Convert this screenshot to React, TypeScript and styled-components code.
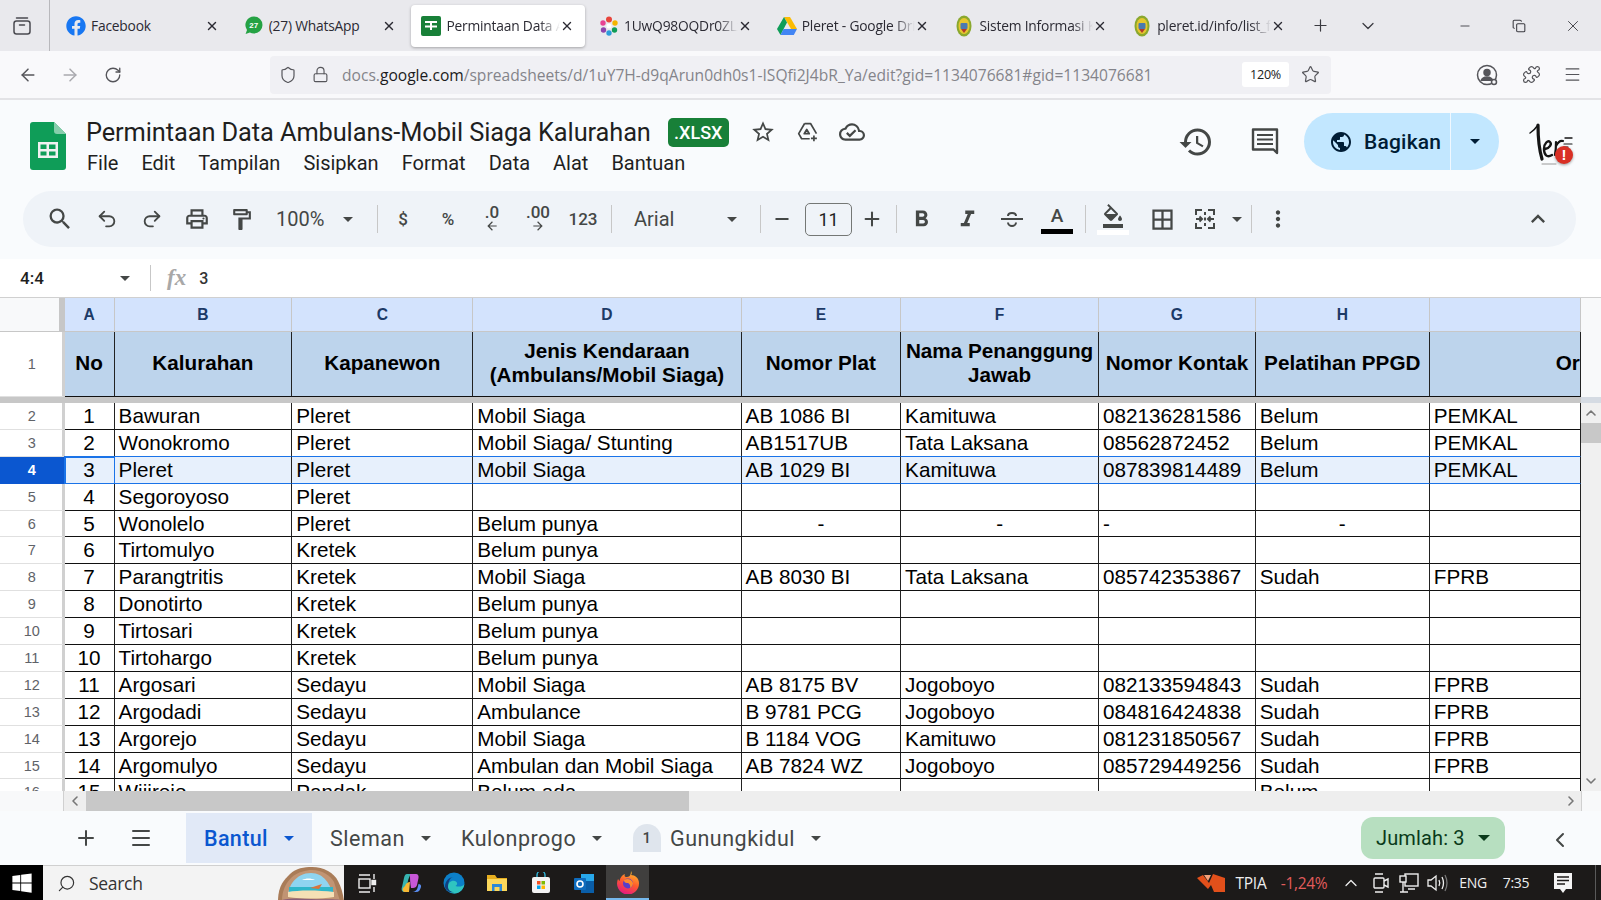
import styled, { createGlobalStyle } from 'styled-components'
import type { ReactNode } from 'react'
import {
  ArrowLeft, ArrowRight, ChevronDown, ChevronLeft, ChevronRight, ChevronUp, Copy, Lock, Menu, Minus, Plus, Puzzle, Redo2, RotateCw, Search, Shield, Star, Undo2, X,
} from 'lucide-react'
import {
  MdArrowBack, MdArrowForward, MdBorderAll, MdExpandLess, MdFormatBold, MdFormatColorFill, MdFormatItalic, MdHistory, MdMoreVert,
  MdOutlineCloudDone, MdOutlineFormatPaint, MdOutlinePrint, MdOutlineStarBorder, MdPublic, MdSearch,
} from 'react-icons/md'
import { FaFacebook, FaWindows } from 'react-icons/fa'

const GlobalStyle = createGlobalStyle`
  html, body {
    margin: 0;
    padding: 0;
    height: 100%;
    overflow: hidden;
    background: #fff;
    font-family: "Liberation Sans", Arial, sans-serif;
  }
  * { box-sizing: border-box; }
`

const Page = styled.div`
  width: 1601px;
  height: 900px;
  display: flex;
  flex-direction: column;
  overflow: hidden;
`

/* browser chrome */
const TabStrip = styled.div`
  height: 51px;
  flex: none;
  display: flex;
  align-items: center;
  background: #e9e9ed;
  color: #15141a;
`
const TabViewSlot = styled.div`
  width: 50px;
  height: 51px;
  flex: none;
  display: flex;
  align-items: center;
  justify-content: center;
  padding-right: 5px;
  border-right: 1px solid #b8b8bc;
  margin-right: 6px;
`
const TabRow = styled.div`
  display: flex;
  gap: 4.2px;
  margin-right: 2.5px;
`
const Tab = styled.div<{ $active?: boolean }>`
  width: 173.5px;
  height: 42px;
  display: flex;
  align-items: center;
  padding: 0 11px 0 10px;
  border-radius: 4px;
  background: ${p => (p.$active ? '#fff' : 'transparent')};
  box-shadow: ${p => (p.$active ? '0 1px 3px rgba(0,0,0,.3)' : 'none')};
`
const TabIcon = styled.div`
  width: 20px;
  height: 20px;
  flex: none;
  display: flex;
  align-items: center;
  justify-content: center;
  margin-right: 5px;
  position: relative;
`
const TabTitle = styled.span<{ $fade?: boolean }>`
  flex: 1;
  min-width: 0;
  overflow: hidden;
  white-space: nowrap;
  font: 13.8px "Open Sans", "Noto Sans", sans-serif;
  letter-spacing: -0.2px;
  color: #2b2a33;
  mask-image: ${p => (p.$fade ? 'linear-gradient(to right, #000 82%, transparent)' : 'none')};
`
const StripButton = styled.div<{ $w: number }>`
  width: ${p => p.$w}px;
  height: 40px;
  flex: none;
  display: flex;
  align-items: center;
  justify-content: center;
  color: #3a3a40;
`
const WindowControls = styled.div`
  margin-left: auto;
  padding-right: 1px;
  display: flex;
`
const WaBadge = styled.span`
  position: absolute;
  inset: 0;
  display: flex;
  align-items: center;
  justify-content: center;
  font: bold 8px "Liberation Sans", sans-serif;
  color: #fff;
`

const NavBar = styled.div`
  height: 49px;
  flex: none;
  display: flex;
  align-items: center;
  background: #f9f9fb;
  border-bottom: 2px solid #e3e3e6;
  color: #55555a;
`
const NavButton = styled.div<{ $w: number; $dim?: boolean; $ml?: number }>`
  width: ${p => p.$w}px;
  height: 36px;
  flex: none;
  display: flex;
  align-items: center;
  justify-content: center;
  margin-left: ${p => p.$ml ?? 0}px;
  color: ${p => (p.$dim ? '#a9a9ae' : '#55555a')};
`
const UrlBar = styled.div`
  width: 1061px;
  height: 38px;
  margin-left: 142px;
  flex: none;
  display: flex;
  align-items: center;
  border-radius: 4px;
  background: #f0f0f4;
  padding-left: 9px;
`
const LockIcon = styled(Lock)`
  margin-left: 15px;
  flex: none;
`
const UrlText = styled.div`
  flex: 1;
  margin-left: 13px;
  font: 15.6px "Open Sans", "Noto Sans", sans-serif;
  white-space: nowrap;
  color: #84848a;
  b { font-weight: 400; color: #1b1b20; }
`
const ZoomChip = styled.div`
  width: 47px;
  height: 25px;
  flex: none;
  display: flex;
  align-items: center;
  justify-content: center;
  background: #fff;
  border-radius: 3px;
  font: 12.6px "Open Sans", sans-serif;
  letter-spacing: -0.3px;
  color: #222;
`

/* sheets header */
const DocArea = styled.div`
  height: 159px;
  flex: none;
  background: #f9fbfd;
  padding: 0 25px 0 23px;
  display: flex;
  flex-direction: column;
`
const DocTop = styled.div`
  height: 91px;
  flex: none;
  display: flex;
  align-items: flex-start;
`
const LogoSlot = styled.div`
  width: 42px;
  flex: none;
  margin: 22px 0 0 7px;
`
const TitleBlock = styled.div`
  margin: 15px 0 0 14px;
`
const TitleRow = styled.div`
  display: flex;
  align-items: center;
  height: 34px;
`
const DocTitle = styled.div`
  font: 25.4px Roboto, "Open Sans", sans-serif;
  letter-spacing: -0.1px;
  white-space: nowrap;
  color: #1f1f1f;
`
const XlsxBadge = styled.div`
  width: 61px;
  height: 29px;
  margin-left: 17px;
  display: flex;
  align-items: center;
  justify-content: center;
  background: #188038;
  border-radius: 5px;
  font: 500 18px Roboto, sans-serif;
  color: #fff;
`
const TitleIcon = styled.div<{ $w: number }>`
  width: ${p => p.$w}px;
  display: flex;
  justify-content: center;
  color: #444746;
`
const MenuRow = styled.div`
  display: flex;
  gap: 23px;
  margin-top: 2px;
  padding-left: 1px;
  font: 20px Roboto, sans-serif;
  color: #1f1f1f;
`
const DocActions = styled.div`
  margin-left: auto;
  display: flex;
  align-items: center;
  padding-top: 13px;
  color: #444746;
`
const ActionIcon = styled.div<{ $w: number }>`
  width: ${p => p.$w}px;
  display: flex;
  justify-content: center;
  color: #444746;
`
const ShareButton = styled.div`
  width: 195px;
  height: 57px;
  margin-left: 4px;
  display: flex;
  align-items: center;
  border-radius: 29px;
  background: #c2e7ff;
  color: #001d35;
`
const ShareMain = styled.div`
  width: 147px;
  height: 57px;
  flex: none;
  display: flex;
  align-items: center;
  padding-left: 25px;
  gap: 11px;
  border-right: 1.5px solid #f0f8ff;
  font: 500 21px Roboto, sans-serif;
  letter-spacing: 0.2px;
`
const ShareCaret = styled.div`
  flex: 1;
  display: flex;
  justify-content: center;
`
const Caret = styled.span<{ $c?: string; $s?: number }>`
  display: inline-block;
  flex: none;
  width: 0;
  height: 0;
  border-left: ${p => p.$s ?? 5}px solid transparent;
  border-right: ${p => p.$s ?? 5}px solid transparent;
  border-top: ${p => p.$s ?? 5}px solid ${p => p.$c ?? '#444746'};
`
const AvatarSlot = styled.div`
  width: 48px;
  height: 50px;
  margin-left: 29px;
  position: relative;
`
const AlertDot = styled.span`
  position: absolute;
  right: 3px;
  bottom: 3px;
  width: 18px;
  height: 18px;
  border-radius: 50%;
  background: #d93025;
  color: #fff;
  box-shadow: 0 1px 3px rgba(0,0,0,.4);
  display: flex;
  align-items: center;
  justify-content: center;
  font: bold 15px "Liberation Sans", sans-serif;
`

const ToolPill = styled.div`
  height: 56px;
  flex: none;
  display: flex;
  align-items: center;
  padding: 0 18px 0 13px;
  border-radius: 28px;
  background: #eff3f8;
  color: #444746;
`
const Tool = styled.div<{ $w: number; $push?: boolean }>`
  width: ${p => p.$w}px;
  height: 40px;
  flex: none;
  display: flex;
  align-items: center;
  justify-content: center;
  margin-left: ${p => (p.$push ? 'auto' : '0')};
  font: 500 17px Roboto, sans-serif;
  color: #444746;
`
const SelectTool = styled.div<{ $w: number; $pad: number; $gap: number }>`
  width: ${p => p.$w}px;
  height: 40px;
  flex: none;
  display: flex;
  align-items: center;
  padding-left: ${p => p.$pad}px;
  gap: ${p => p.$gap}px;
  font: 20px Roboto, sans-serif;
  color: #444746;
`
const ToolSep = styled.div<{ $m: number }>`
  width: 1px;
  height: 28px;
  flex: none;
  margin-left: ${p => p.$m}px;
  background: #c7c7c7;
`
const SizeBox = styled.div`
  width: 47px;
  height: 33px;
  flex: none;
  margin-left: 2px;
  display: flex;
  align-items: center;
  justify-content: center;
  border: 1px solid #747775;
  border-radius: 5px;
  font: 18px Roboto, sans-serif;
  color: #1f1f1f;
`
const DecimalTool = styled(Tool)`
  flex-direction: column;
  line-height: 15px;
  font-size: 17px;
  font-weight: 500;
  svg { margin-top: -1px; }
`
const ColorTool = styled(Tool)`
  flex-direction: column;
  gap: 2px;
`
const ColorBar = styled.span<{ $c: string }>`
  width: 32px;
  height: 5px;
  background: ${p => p.$c};
`
const ColorLetter = styled.span`
  font: 500 19px Roboto, sans-serif;
  line-height: 22px;
`

/* formula bar */
const FormulaBar = styled.div`
  height: 38px;
  flex: none;
  display: flex;
  align-items: center;
  background: #fff;
`
const NameBox = styled.div`
  width: 151px;
  height: 26px;
  flex: none;
  display: flex;
  align-items: center;
  justify-content: space-between;
  padding: 0 20px 0 20px;
  border-right: 1px solid #c7c7c7;
  font: 500 17px Roboto, sans-serif;
  color: #1f1f1f;
`
const FxLabel = styled.span`
  margin-left: 16px;
  font: italic bold 23px "Liberation Serif", serif;
  color: #a8a8a8;
`
const FormulaValue = styled.span`
  margin-left: 13px;
  font: 500 16px Roboto, sans-serif;
  color: #333;
`

/* grid */
const SheetArea = styled.div`
  height: 494px;
  flex: none;
  display: flex;
  border-top: 1px solid #d0d0d0;
`
const GridPane = styled.div`
  width: 1581px;
  flex: none;
  overflow: hidden;
  background: #fff;
`
const GRID = '64.6px 50px 177.7px 181px 268.3px 159.5px 198px 156.7px 174px 151.7px'
const GridRow = styled.div<{ $h: number }>`
  display: grid;
  grid-template-columns: ${GRID};
  height: ${p => p.$h}px;
`
const Corner = styled.div`
  background: #f8f9fa;
  border-right: 6px solid #c7c7c7;
  border-bottom: 1px solid #c7c7c7;
`
const ColHead = styled.div`
  display: flex;
  align-items: center;
  justify-content: center;
  background: #d3e3fd;
  border-right: 1px solid #c7c7c7;
  border-bottom: 1px solid #c7c7c7;
  font: bold 15.6px "Liberation Sans", sans-serif;
  color: #1c3a66;
`
const RowNum = styled.div<{ $sel?: boolean }>`
  display: flex;
  align-items: center;
  justify-content: center;
  background: ${p => (p.$sel ? '#0b57d0' : '#fff')};
  border-right: 3px solid ${p => (p.$sel ? '#0b57d0' : '#d0d0d0')};
  border-bottom: 1px solid ${p => (p.$sel ? '#0b57d0' : '#e0e0e0')};
  padding-left: 2px;
  font: ${p => (p.$sel ? 'bold' : 'normal')} 14.5px "Liberation Sans", sans-serif;
  color: ${p => (p.$sel ? '#fff' : '#5f6368')};
`
const HeadCell = styled.div<{ $clip?: boolean }>`
  display: flex;
  align-items: center;
  justify-content: ${p => (p.$clip ? 'flex-start' : 'center')};
  text-align: center;
  overflow: hidden;
  white-space: ${p => (p.$clip ? 'nowrap' : 'normal')};
  padding: ${p => (p.$clip ? '0 0 2px 126px' : '0 3px 2px')};
  background: #bdd4ec;
  border-right: 1px solid #222;
  border-bottom: 1px solid #111;
  font: bold 20.7px/24px "Liberation Sans", sans-serif;
  color: #000;
`
const FreezeBar = styled.div`
  height: 6px;
  background: #c7c7c7;
`
const Cell = styled.div<{ $align?: string; $sel?: boolean; $blue?: boolean; $active?: boolean }>`
  display: flex;
  align-items: center;
  justify-content: ${p => p.$align ?? 'flex-start'};
  padding: 0 4px;
  overflow: hidden;
  white-space: nowrap;
  background: ${p => (p.$sel ? '#e7f0fc' : '#fff')};
  border-right: 1px solid #222;
  border-bottom: 1px solid ${p => (p.$blue ? '#1a73e8' : '#111')};
  outline: ${p => (p.$active ? '2px solid #1a73e8' : 'none')};
  outline-offset: -1px;
  font: 20.7px "Liberation Sans", sans-serif;
  color: #000;
`
const VScroll = styled.div`
  width: 20px;
  flex: none;
  display: flex;
  flex-direction: column;
  background: #f0f0f0;
`
const VScrollHead = styled.div`
  height: 99px;
  flex: none;
  background: #f8f9fa;
  border-bottom: 6px solid #d5dbe3;
  box-sizing: content-box;
`
const VArrow = styled.div`
  height: 20px;
  flex: none;
  display: flex;
  align-items: center;
  justify-content: center;
  color: #777;
`
const VThumb = styled.div`
  height: 20px;
  flex: none;
  background: #c8c8c8;
`
const VTrack = styled.div`
  flex: 1;
`
const HScroll = styled.div`
  height: 20px;
  flex: none;
  display: flex;
  background: #eeeeee;
  color: #777;
`
const HScrollLead = styled.div`
  width: 64px;
  flex: none;
  background: #f8f9fa;
  border-right: 1px solid #d0d0d0;
`
const HArrow = styled.div<{ $w: number }>`
  width: ${p => p.$w}px;
  flex: none;
  display: flex;
  align-items: center;
  justify-content: center;
`
const HThumb = styled.div`
  width: 603px;
  flex: none;
  background: #c8c8c8;
`
const HTrack = styled.div`
  flex: 1;
`
const HScrollEnd = styled.div`
  width: 20px;
  flex: none;
  background: #f8f9fa;
  border-left: 1px solid #d0d0d0;
`

/* sheet tabs */
const SheetBar = styled.div`
  height: 54px;
  flex: none;
  display: flex;
  align-items: center;
  background: #f9fbfd;
  color: #444746;
`
const BarIcon = styled.div<{ $w: number; $ml?: number }>`
  width: ${p => p.$w}px;
  margin-left: ${p => p.$ml ?? 0}px;
  flex: none;
  display: flex;
  justify-content: center;
`
const SheetTab = styled.div<{ $w: number; $active?: boolean; $pad?: number; $ml?: number }>`
  width: ${p => p.$w}px;
  height: 50px;
  flex: none;
  display: flex;
  align-items: center;
  margin-left: ${p => p.$ml ?? 0}px;
  padding-left: ${p => p.$pad ?? 18}px;
  background: ${p => (p.$active ? '#e1e9f7' : 'transparent')};
  font: ${p => (p.$active ? 500 : 400)} 21.5px Roboto, sans-serif;
  letter-spacing: ${p => (p.$active ? 0.35 : 0.5)}px;
  color: ${p => (p.$active ? '#0b57d0' : '#444746')};
`
const TabLabel = styled.span<{ $gap: number }>`
  margin-right: ${p => p.$gap}px;
`
const SheetCount = styled.span`
  width: 28px;
  height: 28px;
  margin-right: 9px;
  flex: none;
  display: flex;
  align-items: center;
  justify-content: center;
  border-radius: 14px 14px 0 0;
  background: #dfe5ed;
  font: 500 15px Roboto, sans-serif;
  color: #444746;
`
const SumChip = styled.div`
  width: 144px;
  height: 42px;
  margin-left: auto;
  display: flex;
  align-items: center;
  padding-left: 15px;
  gap: 13px;
  border-radius: 12px;
  background: #b7dfc0;
  font: 400 20px Roboto, sans-serif;
  letter-spacing: 0.15px;
  color: #0a3a1a;
`
const SumToggle = styled.div`
  width: 40px;
  margin: 3px 21px 0 35px;
  flex: none;
  display: flex;
  justify-content: center;
  color: #444746;
`

/* taskbar */
const Taskbar = styled.div`
  height: 35px;
  flex: none;
  display: flex;
  align-items: center;
  background: #1c1a19;
  color: #f0f0f0;
`
const StartSlot = styled.div`
  width: 43px;
  height: 35px;
  flex: none;
  display: flex;
  align-items: center;
  justify-content: center;
  background: #000;
`
const SearchBox = styled.div`
  width: 301px;
  height: 35px;
  flex: none;
  display: flex;
  align-items: center;
  padding-left: 14px;
  background: #f3f3f3;
  border-top: 1px solid #d0d0d0;
  color: #333;
  font: 17.5px "Open Sans", sans-serif;
  letter-spacing: -0.3px;
`
const SearchGlass = styled(Search)`
  transform: scaleX(-1);
  flex: none;
`
const SearchLabel = styled.span`
  margin-left: 13px;
  flex: 1;
`
const TaskItem = styled.div<{ $w: number; $on?: boolean }>`
  width: ${p => p.$w}px;
  height: 35px;
  flex: none;
  display: flex;
  align-items: center;
  justify-content: center;
  background: ${p => (p.$on ? '#403f3e' : 'transparent')};
  border-bottom: ${p => (p.$on ? '2px solid #76b9ed' : '0')};
`
const Tray = styled.div`
  margin-left: auto;
  display: flex;
  align-items: center;
  height: 35px;
  font: 15.5px "Open Sans", sans-serif;
  letter-spacing: -0.3px;
`
const TrayItem = styled.div<{ $w: number; $c?: string; $s?: number }>`
  width: ${p => p.$w}px;
  flex: none;
  display: flex;
  align-items: center;
  justify-content: center;
  white-space: nowrap;
  font-size: ${p => p.$s ?? 15.5}px;
  color: ${p => p.$c ?? '#eee'};
`
const ShowDesktop = styled.div`
  width: 6px;
  height: 35px;
  margin-left: 7px;
  flex: none;
  border-left: 1px solid #5a5a5a;
`

const Emblem = () => (
  <svg width="16" height="22" viewBox="0 0 16 22">
    <ellipse cx="8" cy="11" rx="7.5" ry="10.5" fill="#8aa82e" />
    <ellipse cx="8" cy="11" rx="5.5" ry="8" fill="#e5c72f" />
    <rect x="4.5" y="8" width="7" height="6" rx="1" fill="#4a7ab0" />
    <path d="M5 14h6l-3 4z" fill="#b23a2c" />
  </svg>
)

const SheetsFavicon = () => (
  <svg width="20" height="20" viewBox="0 0 20 20">
    <rect width="20" height="20" rx="2" fill="#188038" />
    <path d="M4 5h12v9H4z" fill="#fff" />
    <path d="M4 7h5v2.500H4zM11 7h5v2.500h-5zM4 11.500h5V14H4zM11 11.500h5V14h-5z" fill="#188038" />
  </svg>
)

const PinwheelIcon = () => (
  <svg width="18" height="20" viewBox="0 0 18 20">
    <circle cx="9" cy="3.5" r="3" fill="#e8453c" />
    <circle cx="15" cy="7" r="2.7" fill="#f4b400" />
    <circle cx="14.5" cy="14" r="2.7" fill="#0f9d58" />
    <circle cx="9" cy="17" r="2.7" fill="#2d9cdb" />
    <circle cx="3.5" cy="14" r="2.7" fill="#8e44ad" />
    <circle cx="3" cy="7" r="2.7" fill="#e84393" />
    <circle cx="9" cy="10" r="2.5" fill="#fff" />
  </svg>
)

const DriveIcon = () => (
  <svg width="20" height="18" viewBox="0 0 20 18">
    <path d="M7 0h6l7 12h-6z" fill="#fbbc04" />
    <path d="M7 0l3 5.5L3.5 18 0 12z" fill="#0f9d58" />
    <path d="M6.5 12H20l-3.2 6H3.5z" fill="#4285f4" />
  </svg>
)

const WhatsAppIcon = () => (
  <>
    <svg width="18" height="19" viewBox="0 0 18 19">
      <path d="M9 .5a8.5 8.5 0 0 1 0 17c-1.5 0-2.9-.4-4.100-1L.6 18l1.400-4.100A8.500 8.500 0 0 1 9 .5z" fill="#25a244" />
    </svg>
    <WaBadge>27</WaBadge>
  </>
)

const SheetsLogo = () => (
  <svg width="36" height="48" viewBox="0 0 36 48">
    <path d="M3 0h21l12 12v33a3 3 0 0 1-3 3H3a3 3 0 0 1-3-3V3a3 3 0 0 1 3-3z" fill="#0f9d58" />
    <path d="M24 0l12 12h-9a3 3 0 0 1-3-3z" fill="#87ceac" />
    <path d="M8 20h20v16H8zm2.500 2.500V27h6v-4.500zm8.500 0V27h6.500v-4.500zM10.500 29.500V33.500h6v-4zm8.500 0v4h6.500v-4z" fill="#f1f1f1" fillRule="evenodd" />
  </svg>
)

const DriveAddIcon = () => (
  <svg width="26" height="26" viewBox="0 0 26 26" fill="none" stroke="#444746" strokeWidth="2" strokeLinejoin="round">
    <path d="M9 3h7l7 12M9 3L2 15l3.500 6H15" />
    <path d="M11.500 10L8.500 15h6z" />
    <path d="M20 17v7M16.500 20.500h7" />
  </svg>
)

const CommentIcon = () => (
  <svg width="30" height="30" viewBox="0 0 30 30" fill="none" stroke="#444746" strokeWidth="2.400">
    <path d="M3 2.500h24V26l-3.500-3.500H3z" strokeLinejoin="round" />
    <path d="M7 8h16M7 12.500h16M7 17h16" strokeWidth="2.200" />
  </svg>
)

const StrikeIcon = () => (
  <svg width="24" height="24" viewBox="0 0 24 24" fill="none" stroke="#444746" strokeWidth="2">
    <path d="M1 12h22" />
    <path d="M8 9c0-2 2-3 4-3s4 1 4 3M8 15.500c0 2 2 3.500 4 3.500s4-1.500 4-3.500" />
  </svg>
)

const Signature = () => (
  <svg width="48" height="50" viewBox="0 0 48 50" fill="none" stroke="#151515" strokeLinecap="round">
    <path d="M2 16C5 14 8 11 10 8" strokeWidth="1.500" />
    <path d="M10 8C10 20 11 32 14 42" strokeWidth="3.200" />
    <path d="M17 32c5-1 7-5 5-7s-6 1-6 7 3 9 8 6" strokeWidth="2.400" />
    <path d="M28 25c0 4 0 8-1 13M28 29c2-4 4-6 7-5" strokeWidth="2.200" />
    <path d="M36 27h8M36 30h4" strokeWidth="1.200" />
    <path d="M37 21h7" strokeWidth="1.400" />
    <path d="M14 47h14" strokeWidth="1" stroke="#999" />
  </svg>
)

const MergeIcon = () => (
  <svg width="24" height="24" viewBox="0 0 24 24" fill="none" stroke="#444746" strokeWidth="2">
    <path d="M9 3H3v5M15 3h6v5M9 21H3v-5M15 21h6v-5" />
    <path d="M3 12h6m-2.500-2.500L9 12l-2.500 2.500M21 12h-6m2.500-2.500L15 12l2.500 2.500M12 5v3M12 10.500v3M12 16v3" />
  </svg>
)

const CopilotIcon = () => (
  <svg width="22" height="22" viewBox="0 0 22 22">
    <path d="M7 2h4c-3 4-4 10-4 18H5c-3 0-4-2-3-5l2-9c.5-2.500 1.500-4 3-4z" fill="#36b3b0" />
    <path d="M5 14c1-3 3-4 5-4l-1 10H5c-2 0-3-2-2-4z" fill="#f7b733" />
    <path d="M10 2h6c2 0 3 2 2.500 4L17 13c-.5 2-2 3-4 3h-2c-1-5-1-10-1-14z" fill="#c757d8" />
    <path d="M12 20c3 0 5-2 5.500-4l1-4c1.500 0 3 1 2.500 3-1 3-2 5-5 5z" fill="#5a8df0" />
  </svg>
)

const EdgeIcon = () => (
  <svg width="22" height="22" viewBox="0 0 22 22">
    <circle cx="11" cy="11" r="10.500" fill="#0c7fc8" />
    <path d="M21.500 12c-1 5.500-5 9.500-10 9.500-4 0-7-3-7-6.500 0-5 6-8 9-5 1 1 1 3-1 4 3 1 7 1 9-2z" fill="#2fc4c0" />
    <path d="M5 15c0 3 3 5 6 5-3 1-8-1-9-5 0-6 4-10 9-10-4 0-6 5-6 10z" fill="#123f7c" />
  </svg>
)

const FolderIcon = () => (
  <svg width="22" height="20" viewBox="0 0 22 20">
    <path d="M1 2h8l2 3h10v13H1z" fill="#e6ae1f" />
    <path d="M1 6h20v12H1z" fill="#fbd75b" />
    <path d="M6 11h10v7h-2.500v-4h-5v4H6z" fill="#2b88d8" />
  </svg>
)

const StoreIcon = () => (
  <svg width="20" height="22" viewBox="0 0 20 22">
    <path d="M6 5V3a4 4 0 0 1 8 0v2" fill="none" stroke="#2fb4d8" strokeWidth="1.400" />
    <rect x="1" y="5" width="18" height="16" rx="2" fill="#f2f2f2" />
    <rect x="6" y="9" width="3.500" height="3.500" fill="#f25022" />
    <rect x="10.500" y="9" width="3.500" height="3.500" fill="#7fba00" />
    <rect x="6" y="13.500" width="3.500" height="3.500" fill="#00a4ef" />
    <rect x="10.500" y="13.500" width="3.500" height="3.500" fill="#ffb900" />
  </svg>
)

const OutlookIcon = () => (
  <svg width="22" height="22" viewBox="0 0 22 22">
    <path d="M8 2h13v15H8z" fill="#28a8ea" />
    <path d="M8 9l13 0v12H8z" fill="#0a5ea8" />
    <rect x="1" y="6" width="12" height="12" rx="1" fill="#0f6cbd" />
    <circle cx="7" cy="12" r="3" fill="none" stroke="#fff" strokeWidth="1.600" />
  </svg>
)

const FirefoxIcon = () => (
  <svg width="24" height="24" viewBox="0 0 24 24">
    <defs>
      <linearGradient id="ffBody" x1="0.7" y1="0" x2="0.3" y2="1">
        <stop offset="0" stopColor="#ffbd2e" />
        <stop offset="0.5" stopColor="#ff5a2c" />
        <stop offset="1" stopColor="#e31587" />
      </linearGradient>
    </defs>
    <path d="M15 1c1 2 1 3 0 4 4 0 8 3 8 8a11 11 0 1 1-21-4c1 1 1 2 1.500 2C4 8 6 5 9 4c-1 2 0 3 2 3 3 0 4-3 4-6z" fill="url(#ffBody)" />
    <circle cx="12" cy="13.500" r="5" fill="#5a3ec8" />
    <path d="M8 10c3-2 8-1 9 3 0 2-1 4-3 5 1-3-1-5-3-5-2 0-3-1-3-3z" fill="#ff8a2c" />
  </svg>
)

const TaskViewIcon = () => (
  <svg width="20" height="22" viewBox="0 0 20 22" fill="none" stroke="#eee" strokeWidth="1.400">
    <path d="M2 3h11M2 20h11M17 2v5M17 15v5" />
    <rect x="2" y="7" width="11" height="9" />
    <rect x="15" y="8.500" width="3.500" height="4" fill="#eee" />
  </svg>
)

const BeachArt = () => (
  <svg width="66" height="35" viewBox="0 0 66 35">
    <path d="M0 35C0 20 6 14 12 8 18 2 26 1 34 1c12 0 22 6 26 14 3 6 5 12 6 20z" fill="#a97c58" />
    <path d="M4 35C4 24 8 17 14 11 20 6 28 4 34 4c10 0 18 5 22 12l6 19z" fill="#c19473" />
    <path d="M10 30C10 20 18 7 33 7c13 0 20 12 22 23z" fill="#8fd4f0" />
    <path d="M24 14c4-2 9-2 13 0H24z" fill="#fff" />
    <path d="M11 21h44v6H11z" fill="#2fb6c9" />
    <path d="M10 26c10-2 30-2 46 0v5c-14 2-32 2-46 0z" fill="#f5e0b5" />
    <path d="M32 22l12-4-3 5z" fill="#d9743a" />
    <path d="M0 35c10-3 20-3 33-2s25-1 33 2z" fill="#8a5f78" />
  </svg>
)

const TpiaLogo = () => (
  <svg width="28" height="22" viewBox="0 0 28 22">
    <path d="M0 6l6-3 6 8 4-9 12 4v14H17l-3-7-3 4z" fill="#e2501b" />
    <path d="M7 3l4 6 3-6z" fill="#f5a27a" />
  </svg>
)

const MeetIcon = () => (
  <svg width="18" height="24" viewBox="0 0 18 24" fill="none" stroke="#eee" strokeWidth="1.400">
    <rect x="2" y="7" width="10" height="10" rx="1" />
    <path d="M12 10l4-2v8l-4-2M3 3h8M3 21h8" />
  </svg>
)

const NetworkIcon = () => (
  <svg width="20" height="22" viewBox="0 0 20 22" fill="none" stroke="#eee" strokeWidth="1.400">
    <rect x="6" y="2" width="13" height="12" />
    <rect x="1" y="4" width="6" height="6" fill="#1c1a19" />
    <path d="M4 10v10M1 20h8M9 17h7" />
  </svg>
)

const SpeakerIcon = () => (
  <svg width="22" height="22" viewBox="0 0 22 22" fill="none" stroke="#eee" strokeWidth="1.300">
    <path d="M2 8h3l5-4v14l-5-4H2zM13 8c1 2 1 4 0 6M16 5c2 4 2 8 0 12" />
    <path d="M19 3c2.500 5 2.500 11 0 16" stroke="#777" />
  </svg>
)

const NotifyIcon = () => (
  <svg width="20" height="22" viewBox="0 0 20 22">
    <path d="M1 1h18v16h-6l-3 4-3-4H1z" fill="#f4f4f4" />
    <path d="M4 5h12M4 8.500h12M4 12h8" stroke="#1c1a19" strokeWidth="1.300" />
  </svg>
)

const TabViewIcon = () => (
  <svg width="20" height="20" viewBox="0 0 20 20" fill="none" stroke="#4a4a50" strokeWidth="1.500">
    <rect x="2" y="5" width="16" height="13" rx="2.500" />
    <path d="M4.500 2h11M7.500 9h5" strokeLinecap="round" />
  </svg>
)

const AccountIcon = () => (
  <svg width="22" height="22" viewBox="0 0 22 22" fill="none" stroke="#55555a" strokeWidth="1.500">
    <circle cx="11" cy="11" r="9.500" />
    <circle cx="11" cy="8.500" r="3" fill="#55555a" />
    <path d="M5 17c1-3 3-4 6-4s5 1 6 4" fill="#55555a" />
    <circle cx="18" cy="18" r="2.500" fill="#f9f9fb" />
  </svg>
)

interface TabInfo {
  title: string
  icon: ReactNode
  active?: boolean
  fade?: boolean
}

const tabs: TabInfo[] = [
  { title: 'Facebook', icon: <FaFacebook size={20} color="#1877f2" /> },
  { title: '(27) WhatsApp', icon: <WhatsAppIcon /> },
  { title: 'Permintaan Data Ambulans', icon: <SheetsFavicon />, active: true, fade: true },
  { title: '1UwQ98OQDr0ZLxyz', icon: <PinwheelIcon />, fade: true },
  { title: 'Pleret - Google Drive', icon: <DriveIcon />, fade: true },
  { title: 'Sistem Informasi Kalurahan', icon: <Emblem />, fade: true },
  { title: 'pleret.id/info/list_forum', icon: <Emblem />, fade: true },
]

const columnLetters = ['A', 'B', 'C', 'D', 'E', 'F', 'G', 'H', '']

const headers = [
  'No',
  'Kalurahan',
  'Kapanewon',
  'Jenis Kendaraan (Ambulans/Mobil Siaga)',
  'Nomor Plat',
  'Nama Penanggung Jawab',
  'Nomor Kontak',
  'Pelatihan PPGD',
]

// no, kalurahan, kapanewon, jenis, plat, penanggung jawab, kontak, pelatihan, org
const rows: string[][] = [
  ['1', 'Bawuran', 'Pleret', 'Mobil Siaga', 'AB 1086 BI', 'Kamituwa', '082136281586', 'Belum', 'PEMKAL'],
  ['2', 'Wonokromo', 'Pleret', 'Mobil Siaga/ Stunting', 'AB1517UB', 'Tata Laksana', '08562872452', 'Belum', 'PEMKAL'],
  ['3', 'Pleret', 'Pleret', 'Mobil Siaga', 'AB 1029 BI', 'Kamituwa', '087839814489', 'Belum', 'PEMKAL'],
  ['4', 'Segoroyoso', 'Pleret', '', '', '', '', '', ''],
  ['5', 'Wonolelo', 'Pleret', 'Belum punya', '-', '-', '-', '-', ''],
  ['6', 'Tirtomulyo', 'Kretek', 'Belum punya', '', '', '', '', ''],
  ['7', 'Parangtritis', 'Kretek', 'Mobil Siaga', 'AB 8030 BI', 'Tata Laksana', '085742353867', 'Sudah', 'FPRB'],
  ['8', 'Donotirto', 'Kretek', 'Belum punya', '', '', '', '', ''],
  ['9', 'Tirtosari', 'Kretek', 'Belum punya', '', '', '', '', ''],
  ['10', 'Tirtohargo', 'Kretek', 'Belum punya', '', '', '', '', ''],
  ['11', 'Argosari', 'Sedayu', 'Mobil Siaga', 'AB 8175 BV', 'Jogoboyo', '082133594843', 'Sudah', 'FPRB'],
  ['12', 'Argodadi', 'Sedayu', 'Ambulance', 'B 9781 PCG', 'Jogoboyo', '084816424838', 'Sudah', 'FPRB'],
  ['13', 'Argorejo', 'Sedayu', 'Mobil Siaga', 'B 1184 VOG', 'Kamituwo', '081231850567', 'Sudah', 'FPRB'],
  ['14', 'Argomulyo', 'Sedayu', 'Ambulan dan Mobil Siaga', 'AB 7824 WZ', 'Jogoboyo', '085729449256', 'Sudah', 'FPRB'],
  ['15', 'Wijirejo', 'Pandak', 'Belum ada', '', '', '', 'Belum', ''],
]

const SELECTED_ROW = 2

const cellAlign = (row: string[], col: number) => {
  if (col === 0)
    return 'center'
  // the dashes in row 5 are centred, except in the contact column
  if (row[col] === '-' && col !== 6)
    return 'center'
  return 'flex-start'
}

export default function App() {
  return (
    <Page>
      <GlobalStyle />
      <TabStrip>
        <TabViewSlot><TabViewIcon /></TabViewSlot>
        <TabRow>
          {tabs.map(tab => (
            <Tab key={tab.title} $active={tab.active}>
              <TabIcon>{tab.icon}</TabIcon>
              <TabTitle $fade={tab.fade}>{tab.title}</TabTitle>
              <X size={14} strokeWidth={2.4} color="#2b2a33" />
            </Tab>
          ))}
        </TabRow>
        <StripButton $w={44}><Plus size={19} strokeWidth={1.5} /></StripButton>
        <StripButton $w={52}><ChevronDown size={20} strokeWidth={1.5} /></StripButton>
        <WindowControls>
          <StripButton $w={54}><Minus size={14} strokeWidth={1.5} /></StripButton>
          <StripButton $w={54}><Copy size={14} strokeWidth={1.8} /></StripButton>
          <StripButton $w={54}><X size={18} strokeWidth={1.2} /></StripButton>
        </WindowControls>
      </TabStrip>

      <NavBar>
        <NavButton $w={28} $ml={14}><ArrowLeft size={20} strokeWidth={1.8} /></NavButton>
        <NavButton $w={56} $dim><ArrowRight size={20} strokeWidth={1.8} /></NavButton>
        <NavButton $w={30}><RotateCw size={18} strokeWidth={1.8} /></NavButton>
        <UrlBar>
          <Shield size={18} strokeWidth={1.6} color="#55555a" />
          <LockIcon size={17} strokeWidth={1.6} color="#55555a" />
          <UrlText>docs.<b>google.com</b>/spreadsheets/d/1uY7H-d9qArun0dh0s1-ISQfi2J4bR_Ya/edit?gid=1134076681#gid=1134076681</UrlText>
          <ZoomChip>120%</ZoomChip>
          <NavButton $w={42}><Star size={19} strokeWidth={1.5} /></NavButton>
        </UrlBar>
        <NavButton $w={44} $ml={134}><AccountIcon /></NavButton>
        <NavButton $w={44}><Puzzle size={19} strokeWidth={1.5} /></NavButton>
        <NavButton $w={38}><Menu size={19} strokeWidth={1.5} /></NavButton>
      </NavBar>

      <DocArea>
        <DocTop>
          <LogoSlot><SheetsLogo /></LogoSlot>
          <TitleBlock>
            <TitleRow>
              <DocTitle>Permintaan Data Ambulans-Mobil Siaga Kalurahan</DocTitle>
              <XlsxBadge>.XLSX</XlsxBadge>
              <TitleIcon $w={68}><MdOutlineStarBorder size={26} /></TitleIcon>
              <TitleIcon $w={22}><DriveAddIcon /></TitleIcon>
              <TitleIcon $w={67}><MdOutlineCloudDone size={26} /></TitleIcon>
            </TitleRow>
            <MenuRow>
              <span>File</span>
              <span>Edit</span>
              <span>Tampilan</span>
              <span>Sisipkan</span>
              <span>Format</span>
              <span>Data</span>
              <span>Alat</span>
              <span>Bantuan</span>
            </MenuRow>
          </TitleBlock>
          <DocActions>
            <ActionIcon $w={68}><MdHistory size={36} /></ActionIcon>
            <ActionIcon $w={70}><CommentIcon /></ActionIcon>
            <ShareButton>
              <ShareMain>
                <MdPublic size={24} />
                <span>Bagikan</span>
              </ShareMain>
              <ShareCaret><Caret $c="#001d35" /></ShareCaret>
            </ShareButton>
            <AvatarSlot>
              <Signature />
              <AlertDot>!</AlertDot>
            </AvatarSlot>
          </DocActions>
        </DocTop>
        <ToolPill>
          <Tool $w={48}><MdSearch size={28} /></Tool>
          <Tool $w={46}><Undo2 size={22} strokeWidth={2} /></Tool>
          <Tool $w={44}><Redo2 size={22} strokeWidth={2} /></Tool>
          <Tool $w={45}><MdOutlinePrint size={26} /></Tool>
          <Tool $w={44}><MdOutlineFormatPaint size={25} /></Tool>
          <SelectTool $w={102} $pad={13} $gap={19}>100%<Caret /></SelectTool>
          <ToolSep $m={12} />
          <Tool $w={50}>$</Tool>
          <Tool $w={40}>%</Tool>
          <DecimalTool $w={48}><span>.0</span><MdArrowBack size={14} /></DecimalTool>
          <DecimalTool $w={44}><span>.00</span><MdArrowForward size={14} /></DecimalTool>
          <Tool $w={46}>123</Tool>
          <ToolSep $m={5} />
          <SelectTool $w={148} $pad={22} $gap={53}>Arial<Caret /></SelectTool>
          <ToolSep $m={0} />
          <Tool $w={42}><Minus size={20} strokeWidth={2.2} /></Tool>
          <SizeBox>11</SizeBox>
          <Tool $w={40}><Plus size={22} strokeWidth={2.2} /></Tool>
          <ToolSep $m={4} />
          <Tool $w={48}><MdFormatBold size={27} /></Tool>
          <Tool $w={44}><MdFormatItalic size={27} /></Tool>
          <Tool $w={46}><StrikeIcon /></Tool>
          <ColorTool $w={44}><ColorLetter>A</ColorLetter><ColorBar $c="#000" /></ColorTool>
          <ToolSep $m={6} />
          <ColorTool $w={54}><MdFormatColorFill size={24} /><ColorBar $c="#fff" /></ColorTool>
          <Tool $w={44}><MdBorderAll size={27} /></Tool>
          <Tool $w={41}><MergeIcon /></Tool>
          <Tool $w={24}><Caret /></Tool>
          <ToolSep $m={2} />
          <Tool $w={52}><MdMoreVert size={26} /></Tool>
          <Tool $w={40} $push><MdExpandLess size={28} /></Tool>
        </ToolPill>
      </DocArea>

      <FormulaBar>
        <NameBox>4:4<Caret $s={5} /></NameBox>
        <FxLabel>fx</FxLabel>
        <FormulaValue>3</FormulaValue>
      </FormulaBar>

      <SheetArea>
        <GridPane>
          <GridRow $h={34}>
            <Corner />
            {columnLetters.map((letter, i) => <ColHead key={i}>{letter}</ColHead>)}
          </GridRow>
          <GridRow $h={65}>
            <RowNum>1</RowNum>
            {headers.map(text => <HeadCell key={text}>{text}</HeadCell>)}
            <HeadCell $clip>Organisasi</HeadCell>
          </GridRow>
          <FreezeBar />
          {rows.map((row, r) => {
            const selected = r === SELECTED_ROW
            const blueLine = selected || r === SELECTED_ROW - 1
            return (
              <GridRow key={row[0]} $h={26.9}>
                <RowNum $sel={selected}>{r + 2}</RowNum>
                {row.map((value, c) => (
                  <Cell key={c} $align={cellAlign(row, c)} $sel={selected} $blue={blueLine} $active={selected && c === 0}>{value}</Cell>
                ))}
              </GridRow>
            )
          })}
        </GridPane>
        <VScroll>
          <VScrollHead />
          <VArrow><ChevronUp size={16} strokeWidth={2.4} /></VArrow>
          <VThumb />
          <VTrack />
          <VArrow><ChevronDown size={16} strokeWidth={2.4} /></VArrow>
        </VScroll>
      </SheetArea>

      <HScroll>
        <HScrollLead />
        <HArrow $w={22}><ChevronLeft size={16} strokeWidth={2.4} /></HArrow>
        <HThumb />
        <HTrack />
        <HArrow $w={20}><ChevronRight size={16} strokeWidth={2.4} /></HArrow>
        <HScrollEnd />
      </HScroll>

      <SheetBar>
        <BarIcon $w={61} $ml={55}><Plus size={24} strokeWidth={2} /></BarIcon>
        <BarIcon $w={50}><Menu size={24} strokeWidth={2} /></BarIcon>
        <SheetTab $w={126} $active $ml={20}>
          <TabLabel $gap={16}>Bantul</TabLabel><Caret $c="#0b57d0" />
        </SheetTab>
        <SheetTab $w={133}>
          <TabLabel $gap={16}>Sleman</TabLabel><Caret />
        </SheetTab>
        <SheetTab $w={172} $pad={16}>
          <TabLabel $gap={16}>Kulonprogo</TabLabel><Caret />
        </SheetTab>
        <SheetTab $w={222} $pad={16}>
          <SheetCount>1</SheetCount>
          <TabLabel $gap={16}>Gunungkidul</TabLabel><Caret />
        </SheetTab>
        <SumChip>Jumlah: 3<Caret $c="#0a3a1a" $s={6} /></SumChip>
        <SumToggle><ChevronLeft size={24} strokeWidth={2} /></SumToggle>
      </SheetBar>

      <Taskbar>
        <StartSlot><FaWindows size={22} color="#fff" /></StartSlot>
        <SearchBox>
          <SearchGlass size={19} strokeWidth={1.5} />
          <SearchLabel>Search</SearchLabel>
          <BeachArt />
        </SearchBox>
        <TaskItem $w={45}><TaskViewIcon /></TaskItem>
        <TaskItem $w={43.4}><CopilotIcon /></TaskItem>
        <TaskItem $w={43.4}><EdgeIcon /></TaskItem>
        <TaskItem $w={43.4}><FolderIcon /></TaskItem>
        <TaskItem $w={43.4}><StoreIcon /></TaskItem>
        <TaskItem $w={43.4}><OutlookIcon /></TaskItem>
        <TaskItem $w={43.4} $on><FirefoxIcon /></TaskItem>
        <Tray>
          <TrayItem $w={36}><TpiaLogo /></TrayItem>
          <TrayItem $w={44}>TPIA</TrayItem>
          <TrayItem $w={62} $c="#e25c5c">-1,24%</TrayItem>
          <TrayItem $w={32}><ChevronUp size={20} strokeWidth={1.5} /></TrayItem>
          <TrayItem $w={28}><MeetIcon /></TrayItem>
          <TrayItem $w={28}><NetworkIcon /></TrayItem>
          <TrayItem $w={28}><SpeakerIcon /></TrayItem>
          <TrayItem $w={44} $s={14}>ENG</TrayItem>
          <TrayItem $w={42} $s={14}>7:35</TrayItem>
          <TrayItem $w={51}><NotifyIcon /></TrayItem>
          <ShowDesktop />
        </Tray>
      </Taskbar>
    </Page>
  )
}
